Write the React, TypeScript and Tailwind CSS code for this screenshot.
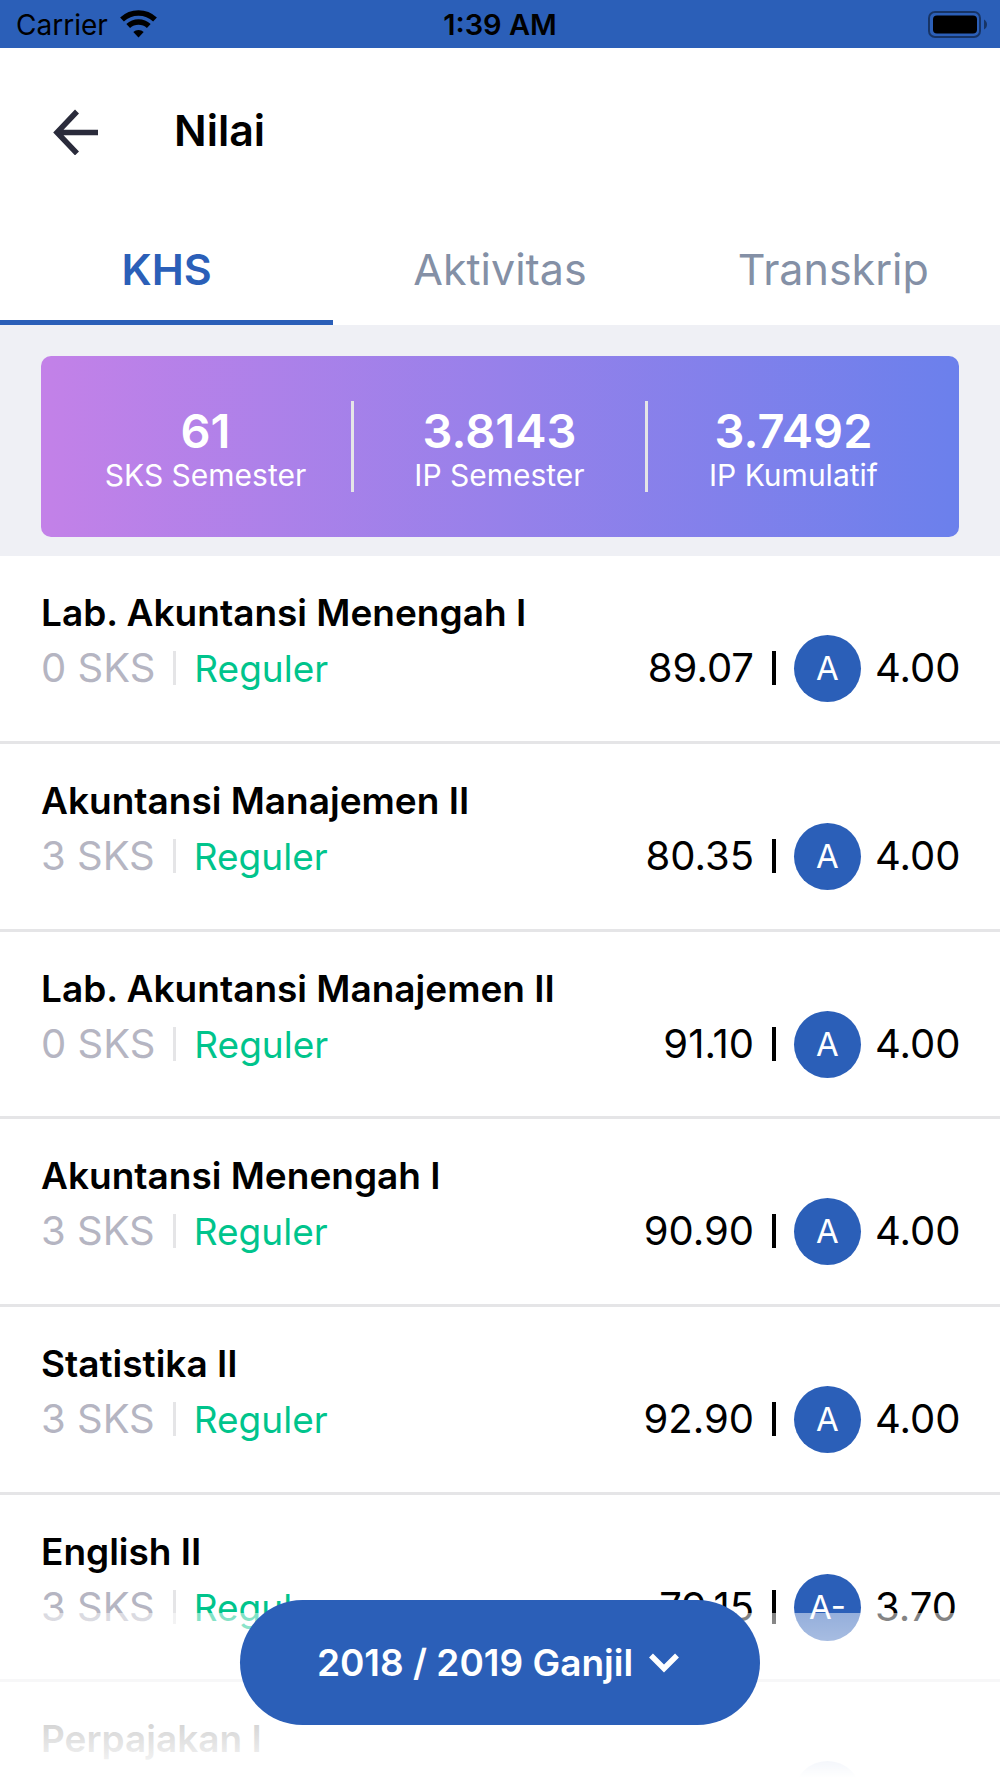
import React, { useState } from "react";

interface Course {
  name: string;
  sks?: number;
  score?: string;
  grade?: string;
  point?: string;
}

interface CourseProps {
  course: Course;
}

const tabs = ["KHS", "Aktivitas", "Transkrip"];

const summary = [
  { value: "61", label: "SKS Semester" },
  { value: "3.8143", label: "IP Semester" },
  { value: "3.7492", label: "IP Kumulatif" },
];

const courses: Course[] = [
  { name: "Lab. Akuntansi Menengah I", sks: 0, score: "89.07", grade: "A", point: "4.00" },
  { name: "Akuntansi Manajemen II", sks: 3, score: "80.35", grade: "A", point: "4.00" },
  { name: "Lab. Akuntansi Manajemen II", sks: 0, score: "91.10", grade: "A", point: "4.00" },
  { name: "Akuntansi Menengah I", sks: 3, score: "90.90", grade: "A", point: "4.00" },
  { name: "Statistika II", sks: 3, score: "92.90", grade: "A", point: "4.00" },
  { name: "English II", sks: 3, score: "79.15", grade: "A-", point: "3.70" },
  { name: "Perpajakan I" },
];

const StatusBar: React.FC = () => {
  return (
    <div className="grid h-12 shrink-0 grid-cols-3 items-center bg-[#2b5fb8] px-3 text-black">
      <div className="flex items-center gap-3 pl-1">
        <span className="pt-0.5 text-[28px] leading-8">Carrier</span>
        <svg width="37" height="28" viewBox="0 0 37 28" fill="none" aria-hidden="true">
          <path d="M2 9.5a24 24 0 0 1 33 0" stroke="#000" strokeWidth="5.5" />
          <path d="M8.2 16a15.2 15.2 0 0 1 20.6 0" stroke="#000" strokeWidth="5.5" />
          <path d="M18.5 27.5l-5.2-5.4a7.6 7.6 0 0 1 10.4 0z" fill="#000" />
        </svg>
      </div>
      <span className="pt-0.5 text-center text-[29px] leading-8 font-semibold">1:39 AM</span>
      <svg className="justify-self-end" width="60" height="28" viewBox="0 0 60 28" fill="none" aria-hidden="true">
        <rect x="1" y="2" width="51" height="25" rx="6" stroke="#000" strokeOpacity="0.45" strokeWidth="2" />
        <rect x="5" y="5.5" width="44" height="18" rx="4" fill="#000" />
        <path d="M56 9.500c4 2 4 8 0 10z" fill="#000" fillOpacity="0.45" />
      </svg>
    </div>
  );
};

const CourseRow: React.FC<CourseProps> = ({ course }) => {
  return (
    <li className="h-[188px] shrink-0 border-b-3 border-[#e5e5e7] px-[41px] pt-[33px] nth-[3n]:h-[187px]">
      <h2 className="text-[37px] leading-[48px] font-semibold">{course.name}</h2>
      <div className="flex h-[62px] items-center justify-between text-[40px] leading-[48px]">
        {course.sks !== undefined && (
          <div className="flex items-baseline">
            <span className="text-[#b5b5c2]">{course.sks} SKS</span>
            <span className="mx-[18px] h-[34px] w-[3px] self-center bg-[#e5e5e7]" />
            <span className="text-[37px] text-[#00c48c]">Reguler</span>
          </div>
        )}
        <div className="ml-auto flex items-center">
          {course.score && (
            <>
              <span>{course.score}</span>
              <span className="mx-[18px] h-[34px] w-1 bg-black" />
            </>
          )}
          <span className="flex size-[67px] items-center justify-center rounded-full bg-[#2b5fb8] text-[33px] text-white">
            {course.grade}
          </span>
          <span className="ml-[14px] w-[84px]">{course.point}</span>
        </div>
      </div>
    </li>
  );
};

const App: React.FC = () => {
  const [active, setActive] = useState<string>("KHS");

  return (
    <div className="relative flex h-screen flex-col overflow-hidden bg-white font-['Inter',sans-serif] text-black">
      <StatusBar />

      <header className="flex h-[168px] shrink-0 items-center px-[53px]">
        <button type="button" aria-label="Kembali">
          <svg width="46" height="46" viewBox="0 0 46 46" fill="none" aria-hidden="true">
            <path d="M24 2.500L4 23.500L24 44.500M4 23.500H45" stroke="#2a2b3b" strokeWidth="5.500" />
          </svg>
        </button>
        <h1 className="ml-[75px] pb-1 text-[43px] leading-[52px] font-semibold">Nilai</h1>
      </header>

      <nav className="grid h-[109px] shrink-0 grid-cols-3">
        {tabs.map((tab) => (
          <button
            key={tab}
            type="button"
            onClick={() => setActive(tab)}
            className={
              tab === active
                ? "border-b-5 border-[#2b5fb8] pt-0.5 text-[43px] font-semibold text-[#2b5fb8]"
                : "border-b-5 border-transparent pt-0.5 text-[43px] text-[#8490a6]"
            }
          >
            {tab}
          </button>
        ))}
      </nav>

      <section className="shrink-0 bg-[#eff0f5] px-[41px] pt-[31px] pb-[19px]">
        <div className="grid h-[181px] grid-cols-3 items-center rounded-[10px] bg-linear-to-r/srgb from-[#c381e8] to-[#6b80ec] pr-[17px] pl-[19px] text-center text-white">
          {summary.map((item) => (
            <div
              key={item.label}
              className="flex h-[91px] flex-col justify-center border-r-3 border-[#e5e5e7] pt-2 last:border-transparent"
            >
              <span className="text-[47px] leading-[48px] font-semibold">{item.value}</span>
              <span className="text-[30px] leading-10">{item.label}</span>
            </div>
          ))}
        </div>
      </section>

      <ul className="flex min-h-0 flex-1 flex-col overflow-hidden">
        {courses.map((course) => (
          <CourseRow key={course.name} course={course} />
        ))}
      </ul>

      {/* fade behind the semester picker */}
      <div className="pointer-events-none absolute inset-x-0 bottom-0 h-[165px] bg-linear-to-b/srgb from-white/50 to-white" />
      <div className="absolute inset-x-0 bottom-[53px] flex justify-center">
        <button
          type="button"
          className="flex h-[125px] w-[520px] items-center justify-center gap-4 rounded-full bg-[#2b5fb8] pr-1 text-[37px] font-semibold text-white"
        >
          2018 / 2019 Ganjil
          <svg width="30" height="20" viewBox="0 0 30 20" fill="none" aria-hidden="true">
            <path d="M2 2.500L15 15.500L28 2.500" stroke="#fff" strokeWidth="5.500" />
          </svg>
        </button>
      </div>
    </div>
  );
};

export default App;
